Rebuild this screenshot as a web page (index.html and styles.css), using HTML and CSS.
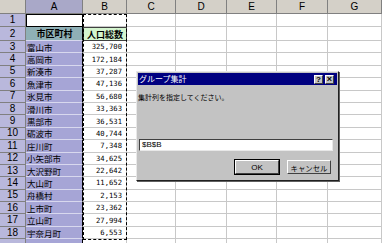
FILE: index.html
```html
<!DOCTYPE html>
<html lang="ja">
<head>
    <meta charset="UTF-8">
    <title>グループ集計</title>
    <link rel="stylesheet" href="styles.css">
</head>
<body>
    <div class="sheet">
        <div class="corner"></div>
        <div class="ch sel">A</div><div class="ch">B</div><div class="ch">C</div><div class="ch">D</div><div class="ch">E</div><div class="ch">F</div><div class="ch">G</div>

        <div class="rh">1</div><div class="a active"></div><div class="b"></div><div class="c"></div><div class="c"></div><div class="c"></div><div class="c"></div><div class="c"></div>
        <div class="rh">2</div><div class="a head">市区町村</div><div class="b head">人口総数</div><div class="c"></div><div class="c"></div><div class="c"></div><div class="c"></div><div class="c"></div>
        <div class="rh">3</div><div class="a">富山市</div><div class="b">325,700</div><div class="c"></div><div class="c"></div><div class="c"></div><div class="c"></div><div class="c"></div>
        <div class="rh">4</div><div class="a">高岡市</div><div class="b">172,184</div><div class="c"></div><div class="c"></div><div class="c"></div><div class="c"></div><div class="c"></div>
        <div class="rh">5</div><div class="a">新湊市</div><div class="b">37,287</div><div class="c"></div><div class="c"></div><div class="c"></div><div class="c"></div><div class="c"></div>
        <div class="rh">6</div><div class="a">魚津市</div><div class="b">47,136</div><div class="c"></div><div class="c"></div><div class="c"></div><div class="c"></div><div class="c"></div>
        <div class="rh">7</div><div class="a">氷見市</div><div class="b">56,680</div><div class="c"></div><div class="c"></div><div class="c"></div><div class="c"></div><div class="c"></div>
        <div class="rh">8</div><div class="a">滑川市</div><div class="b">33,363</div><div class="c"></div><div class="c"></div><div class="c"></div><div class="c"></div><div class="c"></div>
        <div class="rh">9</div><div class="a">黒部市</div><div class="b">36,531</div><div class="c"></div><div class="c"></div><div class="c"></div><div class="c"></div><div class="c"></div>
        <div class="rh">10</div><div class="a">砺波市</div><div class="b">40,744</div><div class="c"></div><div class="c"></div><div class="c"></div><div class="c"></div><div class="c"></div>
        <div class="rh">11</div><div class="a">庄川町</div><div class="b">7,348</div><div class="c"></div><div class="c"></div><div class="c"></div><div class="c"></div><div class="c"></div>
        <div class="rh">12</div><div class="a">小矢部市</div><div class="b">34,625</div><div class="c"></div><div class="c"></div><div class="c"></div><div class="c"></div><div class="c"></div>
        <div class="rh">13</div><div class="a">大沢野町</div><div class="b">22,642</div><div class="c"></div><div class="c"></div><div class="c"></div><div class="c"></div><div class="c"></div>
        <div class="rh">14</div><div class="a">大山町</div><div class="b">11,652</div><div class="c"></div><div class="c"></div><div class="c"></div><div class="c"></div><div class="c"></div>
        <div class="rh">15</div><div class="a">舟橋村</div><div class="b">2,153</div><div class="c"></div><div class="c"></div><div class="c"></div><div class="c"></div><div class="c"></div>
        <div class="rh">16</div><div class="a">上市町</div><div class="b">23,362</div><div class="c"></div><div class="c"></div><div class="c"></div><div class="c"></div><div class="c"></div>
        <div class="rh">17</div><div class="a">立山町</div><div class="b">27,994</div><div class="c"></div><div class="c"></div><div class="c"></div><div class="c"></div><div class="c"></div>
        <div class="rh">18</div><div class="a">宇奈月町</div><div class="b">6,553</div><div class="c"></div><div class="c"></div><div class="c"></div><div class="c"></div><div class="c"></div>
        <div class="rh"></div><div class="a"></div><div class="b"></div><div class="c"></div><div class="c"></div><div class="c"></div><div class="c"></div><div class="c"></div>

        <!-- copy range B1:B18 -->
        <div class="ants"></div>

        <div class="dialog">
            <div class="titlebar">
                <span class="title">グループ集計</span>
                <span class="tbtn">?</span>
                <span class="tbtn close">×</span>
            </div>
            <div class="msg">集計列を指定してください。</div>
            <div class="field">$B$B</div>
            <div class="buttons">
                <span class="btn default">OK</span>
                <span class="btn">キャンセル</span>
            </div>
        </div>
    </div>
</body>
</html>
```

FILE: styles.css
```css
* { box-sizing: border-box; }
body { margin: 0; background: #fff; font-family: "Liberation Sans", "Noto Sans CJK JP", sans-serif; }

.sheet {
    position: relative;
    display: grid;
    grid-template-columns: 26px 57px 44px 49px 51px 50px 51px 54px;
    grid-template-rows: 14px 13px 14px repeat(17, 12.4px);
    width: 382px;
    height: 243px;
    overflow: hidden;
}

.corner, .ch, .rh {
    background: #d4d0c8;
    border-right: 1px solid #808080;
    border-bottom: 1px solid #808080;
    font-size: 10px;
    display: flex;
    align-items: center;
    justify-content: center;
    color: #000;
}
.ch.sel { background: #a9a8c8; }
.rh { background: #b9b8dc; font-size: 10px; line-height: 1; }

.a, .b, .c {
    border-right: 1px solid #c8c8c8;
    border-bottom: 1px solid #c8c8c8;
    display: flex;
    align-items: center;
    overflow: hidden;
    white-space: nowrap;
}
.a {
    background: #a6a5d6;
    border-right: 1px solid #000;
    border-bottom: 1px solid #d8d8ee;
    font-family: "Noto Sans CJK JP", sans-serif;
    font-size: 8.5px;
    padding-left: 1px;
}
.a.active { background: #fff; border: 1px solid #000; }
.a.head {
    background: #8fb0b6;
    font-weight: bold;
    justify-content: center;
    font-size: 9px;
}
.b {
    justify-content: flex-end;
    padding-right: 4px;
    font-family: "DejaVu Sans Mono", monospace;
    font-size: 7.2px;
}
.b.head {
    background: #d4f5cf;
    border: 1px solid #404040;
    justify-content: center;
    padding-right: 0;
    font-family: "Noto Sans CJK JP", sans-serif;
    font-weight: bold;
    font-size: 9px;
}

.ants {
    position: absolute;
    left: 83px;
    top: 14px;
    width: 44px;
    height: 226px;
    border: 1.5px dashed #000;
    pointer-events: none;
}

.dialog {
    position: absolute;
    left: 136px;
    top: 71px;
    width: 203px;
    height: 110px;
    padding: 1px;
    background: #c3c3c3;
    border: 1px solid;
    border-color: #e8e8e8 #202020 #202020 #e8e8e8;
    box-shadow: 1px 1px 0 #606060;
    font-family: "Noto Sans CJK JP", sans-serif;
    display: flex;
    flex-direction: column;
}
.titlebar {
    height: 12px;
    background: #000080;
    display: flex;
    align-items: center;
    padding: 0 3px 0 1px;
    gap: 2px;
}
.title { color: #fff; font-size: 8px; flex: 1; line-height: 1; }
.tbtn {
    width: 9px;
    height: 9px;
    background: #c3c3c3;
    border: 1px solid;
    border-color: #fff #404040 #404040 #fff;
    font-family: "Liberation Sans", sans-serif;
    font-weight: bold;
    font-size: 8px;
    line-height: 7px;
    text-align: center;
    color: #000;
}
.tbtn.close { font-size: 9px; }
.msg {
    margin: 7px 0 0 0;
    font-size: 7px;
    line-height: 10px;
    white-space: nowrap;
}
.field {
    margin: 37px 0 0 1px;
    width: 194px;
    height: 12px;
    background: #fff;
    border: 1px solid;
    border-color: #404040 #e8e8e8 #e8e8e8 #404040;
    font-family: "Liberation Sans", sans-serif;
    font-size: 8px;
    line-height: 10px;
    padding-left: 2px;
}
.buttons {
    margin-top: 9px;
    display: flex;
    justify-content: flex-end;
    gap: 8px;
    padding-right: 6px;
}
.btn {
    width: 44px;
    height: 14px;
    border: 1px solid;
    border-color: #fff #404040 #404040 #fff;
    font-size: 7.4px;
    display: flex;
    align-items: center;
    justify-content: center;
}
.btn.default { outline: 1px solid #000; font-family: "Liberation Sans", sans-serif; font-size: 8px; }
```
